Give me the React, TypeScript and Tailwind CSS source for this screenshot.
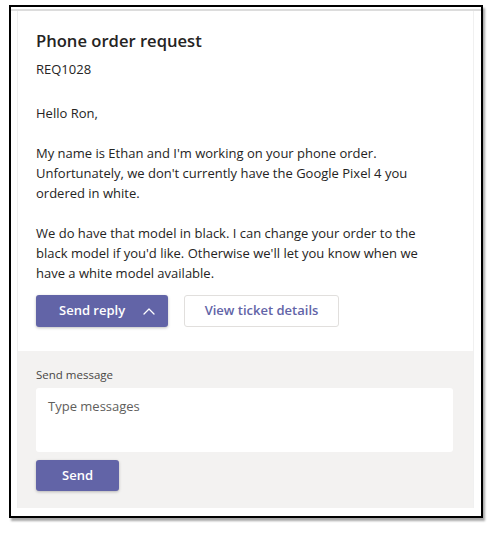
import React from "react";

function ChevronUp() {
  return (
    <svg width="12" height="8" viewBox="0 0 12 8" fill="none">
      <polyline points="1,7 6,2 11,7" stroke="white" strokeWidth="1.3" strokeLinecap="round" strokeLinejoin="round" />
    </svg>
  );
}

export default function App() {
  return (
    <div
      className="w-[493px] h-[536px] bg-white pt-[5px] pl-[9px] text-[#252423]"
      style={{ fontFamily: '"Open Sans", "Noto Sans", sans-serif' }}
    >
      <div className="w-[474px] h-[513px] border-2 border-black bg-white shadow-[2px_3px_2px_rgba(0,0,0,0.35)] flex flex-col">
        <div className="h-[2px]" />
        <div className="h-[2px] bg-[#dcdcdc]" />
        <div className="flex-1 pl-[6px] pr-[7px] pb-[8px] flex flex-col">
          <div className="flex-1 flex flex-col border-l border-r border-[#f0f0f0]">
            <div className="pt-[18px] pl-[18px] pr-[18px] pb-[24px]">
              <div className="text-[16.6px] leading-[24px] font-semibold">Phone order request</div>
              <div className="mt-[6px] text-[13px] leading-[20px]">REQ1028</div>
              <div className="mt-[24px] text-[13px] leading-[20px]">Hello Ron,</div>
              <div className="mt-[20px] text-[13px] leading-[20px]">
                My name is Ethan and I'm working on your phone order.
                <br />
                Unfortunately, we don't currently have the Google Pixel 4 you
                <br />
                ordered in white.
              </div>
              <div className="mt-[20px] text-[13px] leading-[20px]">
                We do have that model in black. I can change your order to the
                <br />
                black model if you'd like. Otherwise we'll let you know when we
                <br />
                have a white model available.
              </div>
              <div className="mt-[12px] flex gap-[16px]">
                <button className="h-[32px] w-[132px] flex items-center pl-[23px] pr-[13px] justify-between rounded-[3px] bg-[#6264a7] text-white text-[13px] font-semibold shadow-[0_1px_3px_rgba(0,0,0,0.25)]">
                  <span>Send reply</span>
                  <ChevronUp />
                </button>
                <button className="h-[32px] w-[155px] flex items-center justify-center rounded-[3px] border border-[#e1dfdd] bg-white text-[#6264a7] text-[13px] font-semibold">
                  View ticket details
                </button>
              </div>
            </div>
            <div className="flex-1 bg-[#f3f2f1] pt-[16px] pl-[18px] pr-[20px]">
              <div className="text-[11.5px] leading-[16px] text-[#484644]">Send message</div>
              <div className="mt-[5px] h-[64px] bg-white rounded-[3px] pt-[8px] pl-[12px] text-[13px] leading-[20px] text-[#605e5c]">
                Type messages
              </div>
              <button className="mt-[8px] h-[31px] w-[83px] flex items-center justify-center rounded-[3px] bg-[#6264a7] text-white text-[13px] font-semibold shadow-[0_1px_3px_rgba(0,0,0,0.25)]">
                Send
              </button>
            </div>
          </div>
        </div>
      </div>
    </div>
  );
}
